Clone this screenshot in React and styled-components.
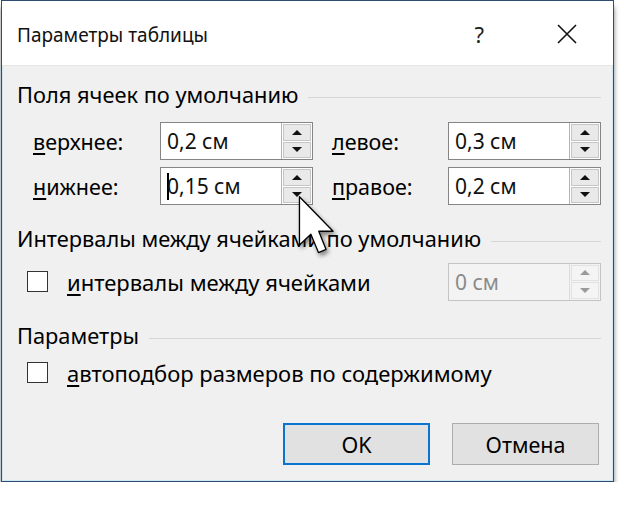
import React from 'react'
import styled, { createGlobalStyle } from 'styled-components'

const GlobalStyle = createGlobalStyle`
  body {
    margin: 0;
    background: #fff;
    font-family: "Noto Sans", "Open Sans", sans-serif;
    color: #000;
  }
`

export default function App() {
  return (
    <>
      <GlobalStyle />
      <Page>
        <Dialog>
          <TitleBar>
            <Title>Параметры таблицы</Title>
            <Help>?</Help>
            <Close>
              <svg width="20" height="20" viewBox="0 0 20 20">
                <path d="M1 1 L19 19 M19 1 L1 19" stroke="#111" strokeWidth="1.6" fill="none" />
              </svg>
            </Close>
          </TitleBar>
          <Body>
            <SectionHeader>Поля ячеек по умолчанию</SectionHeader>
            <FieldGrid>
              <Label><u>в</u>ерхнее:</Label>
              <Spin value="0,2 см" />
              <Label $indent><u>л</u>евое:</Label>
              <Spin value="0,3 см" />
              <Label><u>н</u>ижнее:</Label>
              <Spin value="0,15 см" focused />
              <Label $indent><u>п</u>равое:</Label>
              <Spin value="0,2 см" />
            </FieldGrid>
            <SectionHeader $top={19}>Интервалы между ячейками по умолчанию</SectionHeader>
            <CheckRow $top={11}>
              <Check />
              <CheckLabel><u>и</u>нтервалы между ячейками</CheckLabel>
              <Spin value="0 см" disabled />
            </CheckRow>
            <SectionHeader $top={21}>Параметры</SectionHeader>
            <CheckRow $top={5}>
              <Check />
              <CheckLabel><u>а</u>втоподбор размеров по содержимому</CheckLabel>
            </CheckRow>
            <Buttons>
              <Button $primary>OK</Button>
              <Button>Отмена</Button>
            </Buttons>
          </Body>
          <Cursor width="38" height="62" viewBox="0 0 13 21">
            <path
              d="M0.5 0.5 L0.5 17 L4.4 13.3 L7 19.6 L9.6 18.5 L7.1 12.3 L12 12.3 Z"
              fill="#fff"
              stroke="#000"
              strokeWidth="0.45"
              strokeLinejoin="round"
            />
          </Cursor>
        </Dialog>
      </Page>
    </>
  )
}

function Spin({ value, focused, disabled }) {
  return (
    <SpinBox $disabled={disabled}>
      <SpinValue $disabled={disabled}>
        {focused && <Caret />}
        {value}
      </SpinValue>
      <SpinButtons $disabled={disabled}>
        <SpinButton $disabled={disabled}>
          <Arrow $disabled={disabled} />
        </SpinButton>
        <SpinButton $disabled={disabled}>
          <Arrow $down $disabled={disabled} />
        </SpinButton>
      </SpinButtons>
    </SpinBox>
  )
}

const Page = styled.div`
  padding: 0 0 0 1px;
`

const Dialog = styled.div`
  position: relative;
  width: 613px;
  height: 482px;
  box-sizing: border-box;
  border: 1px solid #2f4d6e;
  background: #f0f0f0;
  box-shadow: inset 0 0 0 1px #cfe6f5, 0 7px 5px rgba(0, 0, 0, 0.5);
  display: flex;
  flex-direction: column;
`

const TitleBar = styled.div`
  height: 64px;
  background: #fff;
  display: flex;
  align-items: center;
  padding: 0 36px 0 15px;
  border-bottom: 1px solid #e6e6e6;
`

const Title = styled.div`
  flex: 1;
  font-size: 19px;
  color: #111;
  padding-top: 3px;
`

const Help = styled.div`
  font-size: 22px;
  color: #222;
  margin-right: 73px;
  padding-top: 2px;
`

const Close = styled.div`
  display: flex;
  padding-top: 2px;
`

const Body = styled.div`
  flex: 1;
  padding: 14px 12px 0 15px;
  display: flex;
  flex-direction: column;
`

const SectionHeader = styled.div`
  display: flex;
  align-items: center;
  height: 28px;
  margin-top: ${p => p.$top || 0}px;
  font-size: 21.8px;
  white-space: nowrap;

  &::after {
    content: '';
    flex: 1;
    height: 1px;
    margin: 6px 0 0 10px;
    background: #d6d6d6;
  }
`

const FieldGrid = styled.div`
  display: grid;
  grid-template-columns: 127px 152px 136px 153px;
  row-gap: 7px;
  margin: 14px 0 0 16px;
  align-items: center;
`

const Label = styled.div`
  font-size: 21.5px;
  padding-left: ${p => (p.$indent ? 20 : 0)}px;
  white-space: nowrap;
  u {
    text-decoration-thickness: 2px;
    text-underline-offset: 3px;
  }
`

const SpinBox = styled.div`
  display: flex;
  width: 153px;
  height: 38px;
  box-sizing: border-box;
  border: 1px solid ${p => (p.$disabled ? '#c4c4c4' : '#858585')};
  background: ${p => (p.$disabled ? '#f3f3f3' : '#fff')};
`

const SpinValue = styled.div`
  flex: 1;
  display: flex;
  align-items: center;
  padding-left: 6px;
  font-size: 21px;
  color: ${p => (p.$disabled ? '#8a8a8a' : '#111')};
`

const Caret = styled.span`
  width: 2px;
  height: 27px;
  background: #000;
  margin-right: -2px;
`

const SpinButtons = styled.div`
  width: 31px;
  display: flex;
  flex-direction: column;
  gap: 1px;
  padding: 1px;
  box-sizing: border-box;
  border-left: 1px solid ${p => (p.$disabled ? '#dcdcdc' : '#b4b4b4')};
`

const SpinButton = styled.div`
  flex: 1;
  display: flex;
  align-items: center;
  justify-content: center;
  background: ${p => (p.$disabled ? '#f4f4f4' : '#e9e9e9')};
  border: 1px solid ${p => (p.$disabled ? '#e2e2e2' : '#c6c6c6')};
`

const Arrow = styled.span`
  width: 0;
  height: 0;
  border-left: 5px solid transparent;
  border-right: 5px solid transparent;
  ${p =>
    p.$down
      ? `border-top: 5px solid ${p.$disabled ? '#9a9a9a' : '#111'};`
      : `border-bottom: 5px solid ${p.$disabled ? '#9a9a9a' : '#111'};`}
`

const CheckRow = styled.div`
  display: flex;
  align-items: center;
  height: 37px;
  margin-top: ${p => p.$top || 0}px;
  padding-left: 10px;
`

const Check = styled.span`
  width: 21px;
  height: 21px;
  box-sizing: border-box;
  border: 1.5px solid #333;
  background: #fff;
  margin-right: 19px;
`

const CheckLabel = styled(Label)`
  flex: 1;
  font-size: 22px;
`

const Buttons = styled.div`
  display: flex;
  justify-content: flex-end;
  gap: 22px;
  margin-top: 32px;
  padding-right: 2px;
`

const Button = styled.div`
  width: 147px;
  height: 42px;
  box-sizing: border-box;
  display: flex;
  align-items: center;
  justify-content: center;
  font-size: 21.5px;
  background: #e1e1e1;
  border: ${p => (p.$primary ? '2px solid #0b74d1' : '1px solid #adadad')};
`

const Cursor = styled.svg`
  position: absolute;
  left: 296px;
  top: 194px;
  filter: drop-shadow(2px 3px 2px rgba(0, 0, 0, 0.45));
`
